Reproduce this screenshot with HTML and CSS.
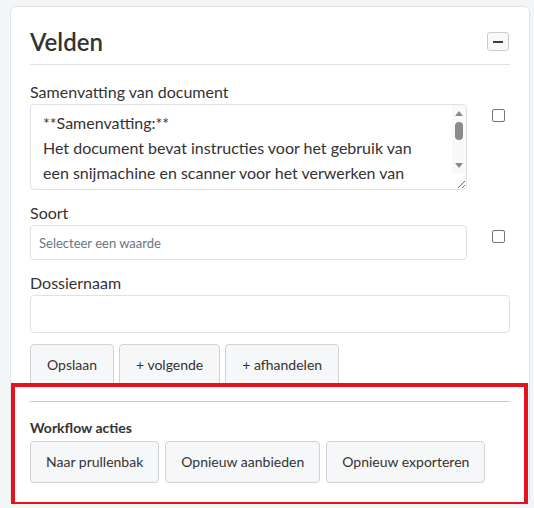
FILE: index.html
```html
<!DOCTYPE html>
<html lang="nl">
<head>
<meta charset="UTF-8">
<meta name="viewport" content="width=device-width, initial-scale=1.0">
<title>Velden</title>
<link rel="stylesheet" href="styles.css">
</head>
<body>

<div class="page">
    <section class="card">
        <div class="card-head">
            <h2>Velden</h2>
            <button class="collapse" title="Inklappen"><span class="minus"></span></button>
        </div>

        <div class="field-row">
            <div class="field">
                <label for="samenvatting">Samenvatting van document</label>
                <div class="area-wrap">
                    <textarea id="samenvatting" class="input area">**Samenvatting:**
Het document bevat instructies voor het gebruik van een snijmachine en scanner voor het verwerken van documenten. Eerst worden de documenten gesneden en daarna gescand.</textarea>
                    
                    <div class="scrollbar">
                        <span class="arrow up"></span>
                        <span class="thumb"></span>
                        <span class="arrow down"></span>
                    </div>
                </div>
            </div>
            <div class="check"><input type="checkbox"></div>
        </div>

        <div class="field-row">
            <div class="field">
                <label for="soort">Soort</label>
                <input id="soort" class="input select" type="text" placeholder="Selecteer een waarde">
            </div>
            <div class="check"><input type="checkbox"></div>
        </div>

        <div class="field">
            <label for="dossier">Dossiernaam</label>
            <input id="dossier" class="input text" type="text">
        </div>

        <div class="actions">
            <button class="btn">Opslaan</button>
            <button class="btn">+ volgende</button>
            <button class="btn">+ afhandelen</button>
        </div>

        <div class="workflow">
            <h3>Workflow acties</h3>
            <div class="actions">
                <button class="btn">Naar prullenbak</button>
                <button class="btn">Opnieuw aanbieden</button>
                <button class="btn">Opnieuw exporteren</button>
            </div>
            <!-- rode markering over het blok -->
            <div class="highlight"></div>
        </div>
    </section>
</div>

</body>
</html>
```

FILE: styles.css
```css
body {
    margin: 0;
    background-color: #f4f5f7;
    font-family: Lato, "Noto Sans", Arial, sans-serif;
    color: #333;
}
.page {
    padding: 6px 4px 0 10px;
}
.card {
    background-color: #fff;
    border: 1px solid #e1e4e8;
    border-radius: 6px;
    padding: 19px 19px 20px;
}
.card-head {
    display: flex;
    align-items: center;
    justify-content: space-between;
    padding-bottom: 7px;
    border-bottom: 1px solid #dee2e6;
    margin-bottom: 17px;
}
h2 {
    margin: 0;
    font-size: 24px;
    font-weight: 600;
    line-height: 31px;
    color: #333;
}
.collapse {
    width: 22px;
    height: 19px;
    padding: 0;
    margin-right: 1px;
    display: flex;
    align-items: center;
    justify-content: center;
    background-color: #f8f9fa;
    border: 1px solid #ccc;
    border-radius: 3px;
}
.minus {
    width: 10px;
    height: 2px;
    background-color: #3a3f44;
}

/* velden */
.field-row {
    display: flex;
    margin-bottom: 13px;
}
.field-row .field {
    flex: 1;
}
.field label {
    display: block;
    font-size: 16px;
    line-height: 20px;
    margin-bottom: 2px;
}
.check {
    width: 43px;
    padding: 27px 0 0 25px;
    box-sizing: border-box;
}
.check input {
    appearance: none;
    display: block;
    width: 13px;
    height: 13px;
    margin: 0;
    border: 1px solid #767676;
    border-radius: 2px;
    background-color: #fff;
}
.input {
    display: block;
    width: 100%;
    box-sizing: border-box;
    border: 1px solid #dee2e6;
    border-radius: 4px;
    font-family: inherit;
    color: #333;
    background-color: #fff;
}
.area-wrap {
    position: relative;
}
.area {
    height: 86px;
    padding: 5px 26px 2px 12px;
    font-size: 16px;
    line-height: 25px;
    resize: vertical;
    overflow: hidden;
}
.select {
    height: 35px;
    padding: 0 8px;
    font-size: 13px;
}
.select::placeholder {
    color: #6c757d;
}
.text {
    height: 38px;
}

/* scrollbar van het tekstvak */
.scrollbar {
    position: absolute;
    top: 1px;
    right: 1px;
    bottom: 16px;
    width: 14px;
    padding: 6px 0;
    box-sizing: border-box;
    display: flex;
    flex-direction: column;
    align-items: center;
    background-color: #f9f9f9;
    border-top-right-radius: 3px;
}
.arrow {
    width: 0;
    height: 0;
    border-left: 4px solid transparent;
    border-right: 4px solid transparent;
}
.arrow.up {
    border-bottom: 5px solid #8a8a8a;
}
.arrow.down {
    margin-top: auto;
    border-top: 5px solid #8a8a8a;
}
.thumb {
    width: 8px;
    height: 18px;
    margin-top: 6px;
    border-radius: 4px;
    background-color: #8a8a8a;
}

/* knoppen */
.actions {
    display: flex;
    gap: 5px;
}
.card > .actions {
    margin-top: 11px;
    padding-bottom: 15px;
    border-bottom: 1px solid #ccc;
}
.btn {
    padding: 10px 16px;
    font-family: inherit;
    font-size: 14px;
    line-height: 20px;
    color: #333;
    background-color: #f6f7f8;
    border: 1px solid #cfd3d7;
    border-radius: 4px;
}
.workflow .actions {
    gap: 6px;
}
.workflow .btn {
    padding: 10px 15px;
}

/* workflow */
.workflow {
    position: relative;
    padding-top: 17px;
}
.workflow h3 {
    margin: 0 0 4px;
    font-size: 14px;
    font-weight: 700;
    line-height: 18px;
}
.highlight {
    position: absolute;
    top: -19px;
    left: -19px;
    right: -18px;
    bottom: -23px;
    border: 4px solid #e3141d;
}
```
